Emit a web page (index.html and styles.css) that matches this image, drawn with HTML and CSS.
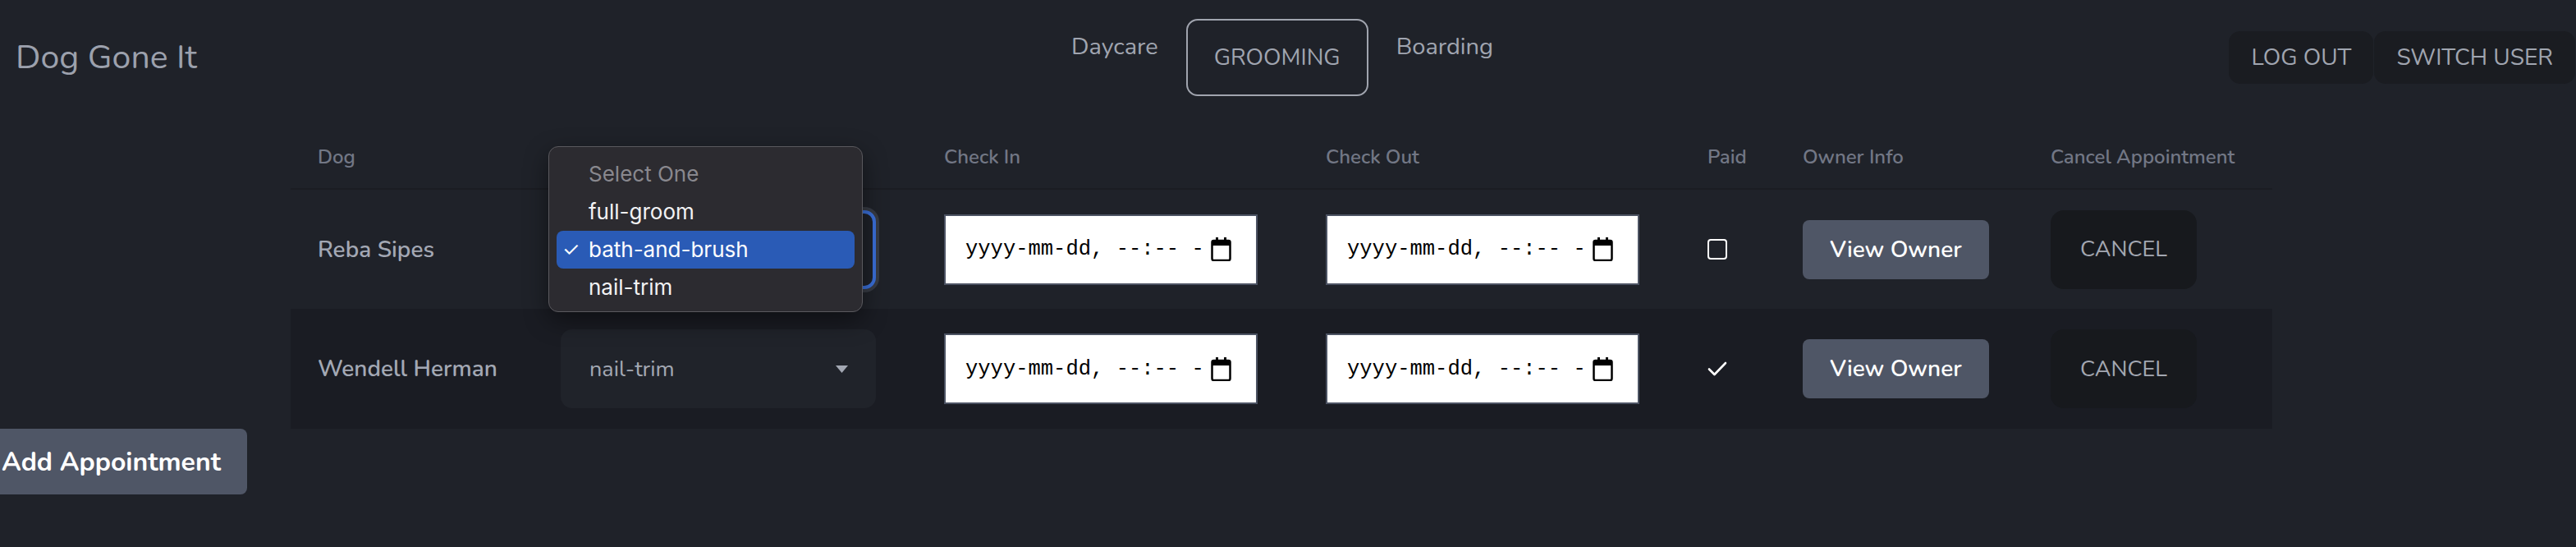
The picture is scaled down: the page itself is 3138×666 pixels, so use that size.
FILE: index.html
```html
<!DOCTYPE html>
<html lang="en">
<head>
<meta charset="utf-8">
<title>Dog Gone It</title>
<link rel="stylesheet" href="styles.css">
</head>
<body>
<header class="topbar">
  <div class="brand">Dog Gone It</div>
  <nav class="tabs">
    <a class="tab">Daycare</a>
    <a class="tab tab-active">GROOMING</a>
    <a class="tab">Boarding</a>
  </nav>
  <div class="account">
    <button class="acct-btn">LOG OUT</button>
    <button class="acct-btn">SWITCH USER</button>
  </div>
</header>

<main class="content">
  <div class="table">
    <div class="row row-head">
      <div class="th">Dog</div>
      <div class="th" aria-label="Service"></div>
      <div class="th">Check In</div>
      <div class="th">Check Out</div>
      <div class="th">Paid</div>
      <div class="th">Owner Info</div>
      <div class="th">Cancel Appointment</div>
    </div>

    <div class="row row-body">
      <div class="td name">Reba Sipes</div>
      <div class="td"><div class="select select-focus" aria-label="bath-and-brush"><span></span><svg class="caret" width="15" height="9" viewBox="0 0 15 9"><path d="M0 0H15L7.5 9Z" fill="#a3a8b3"/></svg></div></div>
      <div class="td"><div class="date"><span>yyyy-mm-dd, --:-- -</span><svg class="cal" width="25" height="29" viewBox="0 0 25 29"><rect x="1.5" y="4" width="22" height="24" rx="2" fill="#fff" stroke="#000" stroke-width="2.5"/><rect x="1.5" y="4" width="22" height="6" fill="#000"/><rect x="6" y="0" width="3" height="6" fill="#000"/><rect x="16" y="0" width="3" height="6" fill="#000"/></svg></div></div>
      <div class="td"><div class="date"><span>yyyy-mm-dd, --:-- -</span><svg class="cal" width="25" height="29" viewBox="0 0 25 29"><rect x="1.5" y="4" width="22" height="24" rx="2" fill="#fff" stroke="#000" stroke-width="2.5"/><rect x="1.5" y="4" width="22" height="6" fill="#000"/><rect x="6" y="0" width="3" height="6" fill="#000"/><rect x="16" y="0" width="3" height="6" fill="#000"/></svg></div></div>
      <div class="td"><span class="checkbox"></span></div>
      <div class="td"><button class="owner-btn">View Owner</button></div>
      <div class="td"><button class="cancel-btn">CANCEL</button></div>
    </div>

    <div class="row row-body row-striped">
      <div class="td name">Wendell Herman</div>
      <div class="td"><div class="select"><span>nail-trim</span><svg class="caret" width="15" height="9" viewBox="0 0 15 9"><path d="M0 0H15L7.5 9Z" fill="#a3a8b3"/></svg></div></div>
      <div class="td"><div class="date"><span>yyyy-mm-dd, --:-- -</span><svg class="cal" width="25" height="29" viewBox="0 0 25 29"><rect x="1.5" y="4" width="22" height="24" rx="2" fill="#fff" stroke="#000" stroke-width="2.5"/><rect x="1.5" y="4" width="22" height="6" fill="#000"/><rect x="6" y="0" width="3" height="6" fill="#000"/><rect x="16" y="0" width="3" height="6" fill="#000"/></svg></div></div>
      <div class="td"><div class="date"><span>yyyy-mm-dd, --:-- -</span><svg class="cal" width="25" height="29" viewBox="0 0 25 29"><rect x="1.5" y="4" width="22" height="24" rx="2" fill="#fff" stroke="#000" stroke-width="2.5"/><rect x="1.5" y="4" width="22" height="6" fill="#000"/><rect x="6" y="0" width="3" height="6" fill="#000"/><rect x="16" y="0" width="3" height="6" fill="#000"/></svg></div></div>
      <div class="td"><svg class="check" width="24" height="18" viewBox="0 0 24 18"><path d="M2 9.5L8.5 16L22 2" fill="none" stroke="#fff" stroke-width="2.6" stroke-linecap="round" stroke-linejoin="round"/></svg></div>
      <div class="td"><button class="owner-btn">View Owner</button></div>
      <div class="td"><button class="cancel-btn">CANCEL</button></div>
    </div>
  </div>

  <button class="add-btn">Add Appointment</button>
</main>

<div class="popup">
  <div class="opt opt-placeholder">Select One</div>
  <div class="opt">full-groom</div>
  <div class="opt opt-selected"><span class="tick">✓</span>bath-and-brush</div>
  <div class="opt">nail-trim</div>
</div>
</body>
</html>
```

FILE: styles.css
```css
* { box-sizing: border-box; }

html, body {
  margin: 0;
  padding: 0;
  background: #1f2229;
  width: 3138px;
  height: 666px;
  overflow: hidden;
  font-family: "Nunito", "Open Sans", "Noto Sans", sans-serif;
  color: #a3a8b3;
}

button {
  font-family: inherit;
  border: none;
  cursor: pointer;
}

/* ---------- top bar ---------- */
.topbar {
  display: grid;
  grid-template-columns: 1fr auto 1fr;
  align-items: center;
  height: 94px;
  margin-top: 23px;
  margin-bottom: 34px;
}

.brand {
  padding-left: 19px;
  font-size: 41px;
  line-height: 48px;
  color: #9ca1ad;
}

.tabs {
  display: flex;
  align-items: center;
  gap: 34px;
  margin-left: -14px;
}

.tab {
  font-size: 29px;
  line-height: 40px;
  color: #a0a5b0;
  padding-bottom: 26px;
}

.tab-active {
  display: flex;
  align-items: center;
  justify-content: center;
  height: 94px;
  width: 222px;
  padding: 0;
  font-size: 28px;
  border: 2px solid #a0a4ae;
  border-radius: 14px;
}

.account {
  display: flex;
  justify-content: flex-end;
  gap: 1px;
  padding-right: 1px;
}

.acct-btn {
  height: 64px;
  padding: 0 27px;
  border-radius: 14px;
  background: #1a1c21;
  color: #a0a5b0;
  font-size: 28px;
}

/* ---------- table ---------- */
.content {
  display: flex;
  flex-direction: column;
  align-items: flex-start;
}

.table {
  margin-left: 354px;
  width: 2414px;
}

.row {
  display: grid;
  grid-template-columns: 296px 467px 465px 465px 116px 302px 270px;
  padding-left: 33px;
  align-items: center;
}

.row-head {
  height: 80px;
  border-bottom: 2px solid #1b1d23;
}

.row-body {
  height: 145px;
}

.row-striped {
  height: 146px;
  background: #1a1c23;
}

.th {
  font-size: 24px;
  font-weight: 600;
  color: #727785;
  white-space: nowrap;
  padding-top: 2px;
}

.td {
  display: flex;
  align-items: center;
}

.name {
  font-size: 28px;
  font-weight: 600;
  color: #a3a8b4;
}

.select {
  display: flex;
  align-items: center;
  justify-content: space-between;
  width: 384px;
  height: 96px;
  padding: 0 34px 0 35px;
  border-radius: 14px;
  background: #20232a;
  font-size: 27px;
  color: #a3a8b3;
}

.select-focus {
  border: 4px solid #3a6fd8;
  box-shadow: 0 0 0 4px #373b44;
  padding: 0 30px 0 31px;
  background: #1e2128;
}

.date {
  display: flex;
  align-items: center;
  width: 382px;
  height: 86px;
  padding-left: 24px;
  background: #fff;
  border: 2px solid #4c5363;
  font-family: "Liberation Mono", "DejaVu Sans Mono", monospace;
  font-size: 25.5px;
  color: #000;
}

.cal {
  margin-left: 8px;
}

.checkbox {
  display: block;
  width: 24px;
  height: 25px;
  border: 2.5px solid #fff;
  border-radius: 4px;
}

.check {
  display: block;
}

.owner-btn {
  width: 227px;
  height: 72px;
  border-radius: 8px;
  background: #4f5666;
  color: #fff;
  font-size: 28px;
  font-weight: 600;
}

.cancel-btn {
  width: 178px;
  height: 96px;
  border-radius: 16px;
  background: #17191d;
  color: #a3a7b1;
  font-size: 27px;
}

.add-btn {
  margin-left: -30px;
  height: 80px;
  padding: 0 32px;
  border-radius: 8px;
  background: #4f5666;
  color: #fff;
  font-size: 32px;
  font-weight: 700;
}

/* ---------- native select popup ---------- */
.popup {
  position: absolute;
  left: 668px;
  top: 178px;
  width: 383px;
  height: 202px;
  padding: 10px 9px;
  background: #2c2b30;
  border: 1.5px solid #5a595e;
  border-radius: 12px;
  box-shadow: 0 10px 30px rgba(0, 0, 0, 0.45);
  font-family: "Inter", "Roboto", sans-serif;
  font-size: 26px;
  color: #f2f2f4;
}

.opt {
  position: relative;
  height: 46px;
  line-height: 46px;
  padding-left: 39px;
  border-radius: 8px;
}

.opt-placeholder {
  color: #89888e;
}

.opt-selected {
  background: #2a5bb6;
  color: #fff;
}

.tick {
  position: absolute;
  left: 7px;
  top: 0;
  font-size: 24px;
}
```
